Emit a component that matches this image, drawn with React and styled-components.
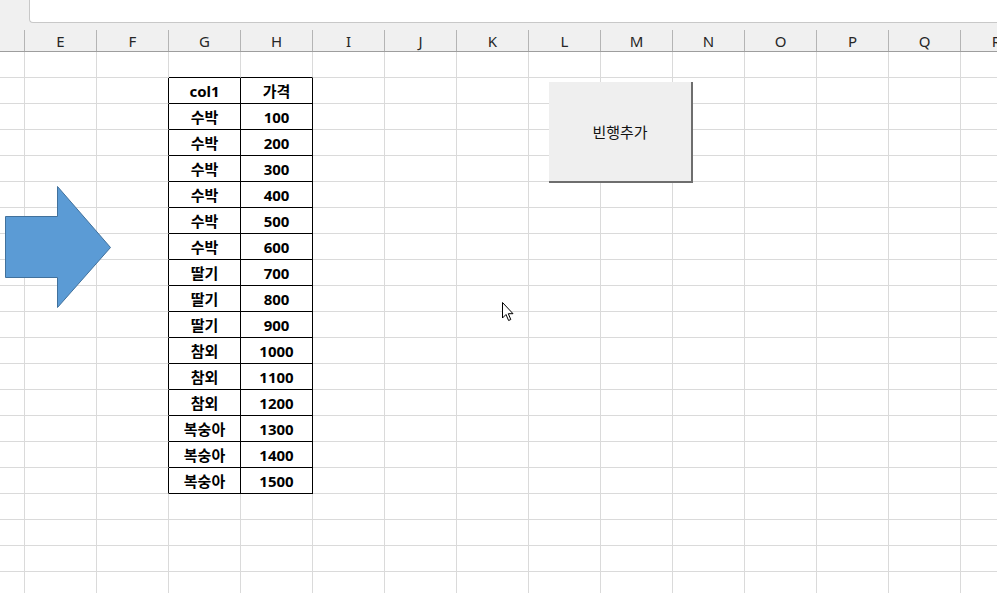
import React from "react";
import styled, { createGlobalStyle } from "styled-components";

const GlobalStyle = createGlobalStyle`
  html, body { margin: 0; padding: 0; background: #ffffff; overflow: hidden; }
  body { font-family: "Noto Sans", "Noto Sans CJK KR", sans-serif; }
`;

const COLS = ["D", "E", "F", "G", "H", "I", "J", "K", "L", "M", "N", "O", "P", "Q", "R"];
const GRID = `25px repeat(14, 72px)`;
const ROWS = 21;

const DATA = [
  ["col1", "가격"],
  ["수박", "100"],
  ["수박", "200"],
  ["수박", "300"],
  ["수박", "400"],
  ["수박", "500"],
  ["수박", "600"],
  ["딸기", "700"],
  ["딸기", "800"],
  ["딸기", "900"],
  ["참외", "1000"],
  ["참외", "1100"],
  ["참외", "1200"],
  ["복숭아", "1300"],
  ["복숭아", "1400"],
  ["복숭아", "1500"],
];

const Window = styled.div`
  position: relative;
  width: 997px;
  height: 593px;
  overflow: hidden;
  background: #ffffff;
  display: flex;
  flex-direction: column;
`;

const TopBar = styled.div`
  height: 23px;
  flex: none;
  background: #f0f0f0;
  display: flex;
  padding-left: 29px;
`;

const FormulaBox = styled.div`
  flex: 1;
  background: #ffffff;
  border-left: 1px solid #c8c8c8;
  border-bottom: 1px solid #c8c8c8;
  border-bottom-left-radius: 4px;
`;

const HeaderRow = styled.div`
  flex: none;
  display: grid;
  grid-template-columns: ${GRID};
  height: 29px;
  box-sizing: border-box;
  background: #f0f0f0;
  border-bottom: 1px solid #9e9e9e;
`;

const HeaderCell = styled.div`
  align-self: end;
  height: 21px;
  box-sizing: border-box;
  border-right: 1px solid #b4b4b4;
  display: flex;
  align-items: center;
  justify-content: center;
  font-family: "Noto Sans", sans-serif;
  font-size: 15px;
  color: #262626;
  padding-top: 1px;
`;

const Body = styled.div`
  display: grid;
  grid-template-columns: ${GRID};
  grid-auto-rows: 26px;
`;

const Cell = styled.div`
  box-sizing: border-box;
  border-right: 1px solid ${(p) => p.$right};
  border-bottom: 1px solid ${(p) => p.$bottom};
  display: flex;
  align-items: center;
  justify-content: center;
  font-family: "Noto Sans", "Noto Sans CJK KR", sans-serif;
  font-weight: 700;
  font-size: 15px;
  color: #000000;
  white-space: nowrap;
`;

const AddButton = styled.div`
  position: absolute;
  left: 549px;
  top: 82px;
  width: 144px;
  height: 101px;
  box-sizing: border-box;
  background: #efefef;
  border-right: 2px solid #6e6e6e;
  border-bottom: 2px solid #6e6e6e;
  display: flex;
  align-items: center;
  justify-content: center;
  font-family: "Noto Sans CJK KR", sans-serif;
  font-size: 15px;
  color: #111111;
`;

const ArrowShape = styled.svg`
  position: absolute;
  left: 0;
  top: 180px;
`;

const Cursor = styled.svg`
  position: absolute;
  left: 501px;
  top: 301px;
`;

const GRIDLINE = "#dadada";

function cellBorders(r, c) {
  const inTable = r >= 1 && r <= 16 && (c === 3 || c === 4);
  const aboveTable = r === 0 && (c === 3 || c === 4);
  const leftOfTable = r >= 1 && r <= 16 && c === 2;
  return {
    right: inTable || leftOfTable ? "#000" : GRIDLINE,
    bottom: inTable || aboveTable ? "#000" : GRIDLINE,
  };
}

export default function App() {
  const cells = [];
  for (let r = 0; r < ROWS; r++) {
    for (let c = 0; c < COLS.length; c++) {
      const b = cellBorders(r, c);
      let text = "";
      if (r >= 1 && r <= 16 && (c === 3 || c === 4)) text = DATA[r - 1][c - 3];
      cells.push(
        <Cell key={`${r}-${c}`} $right={b.right} $bottom={b.bottom}>
          {text}
        </Cell>
      );
    }
  }
  return (
    <Window>
      <GlobalStyle />
      <TopBar>
        <FormulaBox />
      </TopBar>
      <HeaderRow>
        {COLS.map((l, i) => (
          <HeaderCell key={l}>{i === 0 ? "" : l}</HeaderCell>
        ))}
      </HeaderRow>
      <Body>{cells}</Body>

      <ArrowShape width="120" height="140" viewBox="0 0 120 140">
        <polygon
          points="5.5,36.5 57.5,36.5 57.5,6.5 110.5,67.5 57.5,127.5 57.5,97.5 5.5,97.5"
          fill="#5b9bd5"
          stroke="#41719c"
          strokeWidth="1"
        />
      </ArrowShape>

      <AddButton>빈행추가</AddButton>

      <Cursor width="14" height="22" viewBox="0 0 14 22">
        <path
          d="M1.5 1.5 L1.5 17 L5 13.5 L7.6 19.5 L9.8 18.5 L7.3 12.7 L12 12.7 Z"
          fill="#ffffff"
          stroke="#000000"
          strokeWidth="1"
          strokeLinejoin="round"
        />
      </Cursor>
    </Window>
  );
}
